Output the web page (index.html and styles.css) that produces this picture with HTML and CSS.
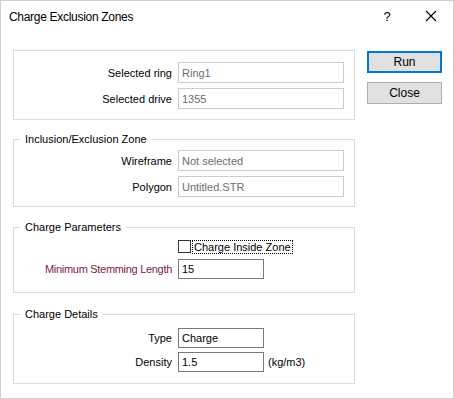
FILE: index.html
```html
<!DOCTYPE html>
<html lang="en">

<head>
    <meta charset="UTF-8">
    <title>Charge Exclusion Zones</title>
    <link rel="stylesheet" href="styles.css">
</head>

<body>
    <div class="window">
        <div class="titlebar">
            <span class="title">Charge Exclusion Zones</span>
            <span class="help">?</span>
            <span class="close">
                <svg width="12" height="12" viewBox="0 0 12 12">
                    <path d="M1 1 L11 11 M11 1 L1 11" stroke="#000" stroke-width="1.1" fill="none" />
                </svg>
            </span>
        </div>

        <div class="content">
            <div class="groups">
                <fieldset class="group g1">
                    <div class="row">
                        <label class="lbl">Selected ring</label>
                        <input class="field wide" type="text" value="Ring1" disabled>
                    </div>
                    <div class="row">
                        <label class="lbl">Selected drive</label>
                        <input class="field wide" type="text" value="1355" disabled>
                    </div>
                </fieldset>

                <fieldset class="group g2">
                    <legend>Inclusion/Exclusion Zone</legend>
                    <div class="row">
                        <label class="lbl">Wireframe</label>
                        <input class="field wide" type="text" value="Not selected" disabled>
                    </div>
                    <div class="row">
                        <label class="lbl">Polygon</label>
                        <input class="field wide" type="text" value="Untitled.STR" disabled>
                    </div>
                </fieldset>

                <fieldset class="group g3">
                    <legend>Charge Parameters</legend>
                    <div class="row checkrow">
                        <span class="lbl"></span>
                        <span class="check"></span>
                        <span class="checklabel">Charge Inside Zone</span>
                    </div>
                    <div class="row">
                        <label class="lbl required">Minimum Stemming Length</label>
                        <input class="field short" type="text" value="15">
                    </div>
                </fieldset>

                <fieldset class="group g4">
                    <legend>Charge Details</legend>
                    <div class="row">
                        <label class="lbl">Type</label>
                        <input class="field short" type="text" value="Charge">
                    </div>
                    <div class="row">
                        <label class="lbl">Density</label>
                        <input class="field short" type="text" value="1.5">
                        <span class="unit">(kg/m3)</span>
                    </div>
                </fieldset>
            </div>

            <div class="buttons">
                <button class="btn default">Run</button>
                <button class="btn">Close</button>
            </div>
        </div>
    </div>
</body>

</html>
```

FILE: styles.css
```css
* {
    margin: 0px;
    padding: 0px;
    box-sizing: border-box;
}

body {
    font-family: "Liberation Sans", Arial, sans-serif;
    font-size: 11px;
    color: #000;
    background: #fff;
}

.window {
    width: 454px;
    height: 399px;
    border: 1px solid #cfcfcf;
    background: #fff;
}

.titlebar {
    display: flex;
    align-items: center;
    height: 29px;
    padding-left: 8px;
}

.title {
    flex: 1;
    font-size: 12px;
    letter-spacing: -0.3px;
    padding-top: 2px;
}

.help {
    font-size: 13px;
    width: 14px;
    text-align: center;
    margin-right: 31px;
    padding-top: 1px;
}

.close {
    display: flex;
    width: 12px;
    margin-right: 16px;
}

.content {
    display: flex;
    padding: 20px 0 0 12px;
}

.groups {
    width: 342px;
}

.group {
    border: 1px solid #dcdcdc;
    min-width: 0;
}

.group legend {
    line-height: 14px;
    padding: 0 5px;
    margin-left: 6px;
}

.g1 {
    padding: 11px 0 10px 0;
}

.g2 {
    margin-top: 12px;
    padding: 4px 0 9px 0;
}

.g3 {
    margin-top: 13px;
    padding: 6px 0 13px 0;
}

.g4 {
    margin-top: 14px;
    padding: 7px 0 11px 0;
}

.row {
    display: flex;
    align-items: center;
    margin-top: 5px;
}

.row:first-of-type,
.g1 .row:first-child {
    margin-top: 0;
}

.g3 .row + .row {
    margin-top: 6px;
}

.g4 .row + .row {
    margin-top: 4px;
}

.lbl {
    width: 158px;
    margin-right: 6px;
    text-align: right;
    white-space: nowrap;
}

.required {
    color: #7d1d3f;
    letter-spacing: -0.3px;
}

.field {
    height: 21px;
    border: 1px solid #cccccc;
    padding: 0 3px;
    font: inherit;
    color: #6d6d6d;
    background: #fff;
    outline: none;
}

.wide {
    width: 166px;
}

.short {
    width: 86px;
    height: 20px;
    border-color: #7a7a7a;
    color: #000;
}

.unit {
    margin-left: 4px;
}

.checkrow {
    height: 13px;
}

.check {
    width: 13px;
    height: 13px;
    border: 1px solid #333;
    background: #fff;
}

.checklabel {
    margin-left: 2px;
    padding: 0 1px;
    line-height: 12px;
    outline: 1px dotted #000;
}

.buttons {
    display: flex;
    flex-direction: column;
    gap: 9px;
    margin-left: 12px;
    padding-top: 1px;
}

.btn {
    width: 75px;
    height: 22px;
    font: inherit;
    font-size: 12px;
    background: #e1e1e1;
    border: 1px solid #adadad;
    color: #000;
}

.btn.default {
    border: 2px solid #0078d7;
}
```
